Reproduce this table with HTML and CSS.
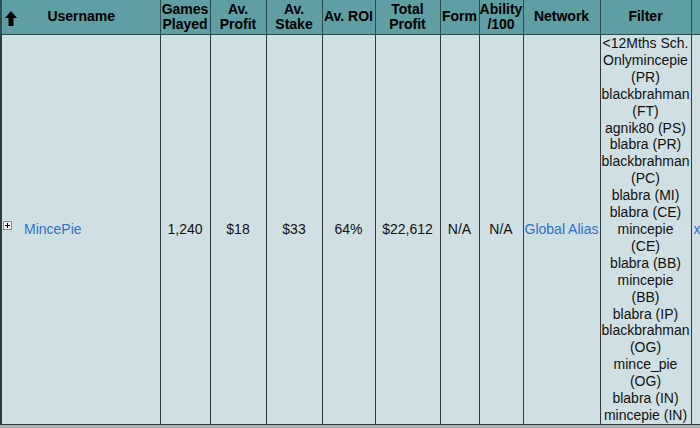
FILE: index.html
```html
<!DOCTYPE html>
<html>
<head>
<meta charset="utf-8">
<link rel="stylesheet" href="styles.css">
</head>
<body>
<table class="grid">
  <colgroup>
    <col class="c-user"><col class="c-games"><col class="c-profit"><col class="c-stake"><col class="c-roi"><col class="c-total"><col class="c-form"><col class="c-ability"><col class="c-network"><col class="c-filter"><col class="c-x">
  </colgroup>
  <thead>
    <tr>
      <th class="th-user">
        <div class="user-head">
          <svg class="sort-arrow" width="12" height="15" viewBox="0 0 12 15"><polygon points="6,0 12,7 8.5,7 8.5,15 3.5,15 3.5,7 0,7" fill="#000"/></svg>
          <span class="user-label">Username</span>
          <span class="spacer"></span>
        </div>
      </th>
      <th>Games<br>Played</th>
      <th>Av.<br>Profit</th>
      <th>Av.<br>Stake</th>
      <th>Av. ROI</th>
      <th>Total<br>Profit</th>
      <th>Form</th>
      <th>Ability<br>/100</th>
      <th>Network</th>
      <th>Filter</th>
      <th></th>
    </tr>
  </thead>
  <tbody>
    <tr>
      <td class="td-user"><span class="expand"><svg width="9" height="9" viewBox="0 0 9 9"><rect x="0.5" y="0.5" width="8" height="8" fill="#f2f2f2" stroke="#8a8a8a"/><path d="M2 4.5h5M4.5 2v5" stroke="#000" stroke-width="1"/></svg></span><a class="link" href="#">MincePie</a></td>
      <td>1,240</td>
      <td>$18</td>
      <td>$33</td>
      <td>64%</td>
      <td>$22,612</td>
      <td>N/A</td>
      <td>N/A</td>
      <td class="td-net"><a class="link" href="#">Global Alias</a></td>
      <td class="td-filter">
        <span class="fl">&lt;12Mths Sch.</span>
        <span class="fl">Onlymincepie</span>
        <span class="fl">(PR)</span>
        <span class="fl">blackbrahman</span>
        <span class="fl">(FT)</span>
        <span class="fl">agnik80 (PS)</span>
        <span class="fl">blabra (PR)</span>
        <span class="fl">blackbrahman</span>
        <span class="fl">(PC)</span>
        <span class="fl">blabra (MI)</span>
        <span class="fl">blabra (CE)</span>
        <span class="fl">mincepie</span>
        <span class="fl">(CE)</span>
        <span class="fl">blabra (BB)</span>
        <span class="fl">mincepie</span>
        <span class="fl">(BB)</span>
        <span class="fl">blabra (IP)</span>
        <span class="fl">blackbrahman</span>
        <span class="fl">(OG)</span>
        <span class="fl">mince_pie</span>
        <span class="fl">(OG)</span>
        <span class="fl">blabra (IN)</span>
        <span class="fl">mincepie (IN)</span>
      </td>
      <td class="td-x"><a class="link" href="#">x</a></td>
    </tr>
  </tbody>
</table>
</body>
</html>
```

FILE: styles.css
```css
html, body {
  margin: 0;
  padding: 0;
  background: #a9b3b5;
  overflow: hidden;
}

.grid {
  border-collapse: collapse;
  table-layout: fixed;
  width: 730px;
  font-family: "Liberation Sans", Arial, sans-serif;
  font-size: 14px;
  color: #111;
}

.c-user { width: 159px; }
.c-games { width: 50px; }
.c-profit { width: 56px; }
.c-stake { width: 56px; }
.c-roi { width: 53px; }
.c-total { width: 65px; }
.c-form { width: 39px; }
.c-ability { width: 44px; }
.c-network { width: 77px; }
.c-filter { width: 91px; }
.c-x { width: 40px; }

.grid th {
  background: #5f9ea3;
  color: #000;
  font-weight: bold;
  line-height: 15.5px;
  height: 34px;
  padding: 0;
  text-align: center;
  vertical-align: middle;
  border-left: 1px solid #2c4e52;
  border-right: 1px solid #2c4e52;
  border-bottom: 1px solid #2c4e52;
}

.grid th.th-user { border-left: 2px solid #2c4e52; }

.user-head {
  display: flex;
  align-items: center;
  padding: 0 4px 0 3px;
}

.sort-arrow { flex: 0 0 12px; margin-top: 2px; }
.user-label { flex: 1; text-align: center; }
.spacer { flex: 0 0 10px; }

.grid td {
  background: #cfe0e4;
  border: 1px solid #2e3a3d;
  padding: 0;
  text-align: center;
  vertical-align: middle;
  line-height: 16.9px;
  white-space: nowrap;
}

.grid td.td-user {
  text-align: left;
  padding-left: 1px;
  border-left: 2px solid #2e3a3d;
}

.expand {
  display: inline-block;
  width: 9px;
  height: 9px;
  margin-right: 12px;
  vertical-align: 4px;
  line-height: 0;
}

.link {
  color: #2f6fc8;
  text-decoration: none;
}

.td-filter .fl { display: block; }

.grid td.td-x {
  text-align: left;
  padding-left: 2px;
}
```
